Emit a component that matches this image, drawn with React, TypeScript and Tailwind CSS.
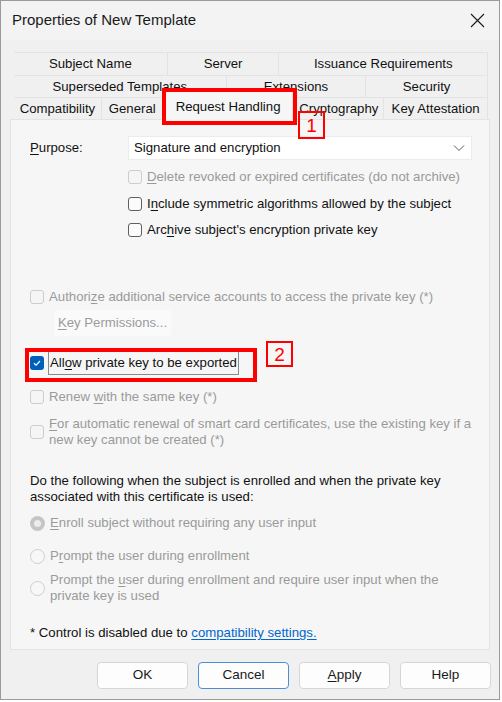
import React from "react";

const font = { fontFamily: '"Liberation Sans", Arial, sans-serif' };

// access-key underline inside a label
function Key({ children }: { children: React.ReactNode }) {
  return <span className="underline underline-offset-2">{children}</span>;
}

function CheckBox({
  checked = false,
  disabled = false,
}: {
  checked?: boolean;
  disabled?: boolean;
}) {
  if (checked) {
    return (
      <span className="flex h-[14px] w-[14px] shrink-0 items-center justify-center rounded-[3px] bg-[#005fb8]">
        <svg width="10" height="10" viewBox="0 0 10 10" fill="none">
          <path d="M2 5.2 L4.1 7.2 L8 3" stroke="#fff" strokeWidth="1.2" />
        </svg>
      </span>
    );
  }
  return (
    <span
      className={`h-[14px] w-[14px] shrink-0 rounded-[3px] border ${
        disabled ? "border-[#cdcdcd] bg-[#f5f5f5]" : "border-[#5f5f5f] bg-[#fbfbfb]"
      }`}
    />
  );
}

function Radio({ selected = false }: { selected?: boolean }) {
  if (selected) {
    return (
      <span className="flex h-[15px] w-[15px] shrink-0 items-center justify-center rounded-full bg-[#c5c5c5]">
        <span className="h-[7px] w-[7px] rounded-full bg-[#ececec]" />
      </span>
    );
  }
  return <span className="h-[15px] w-[15px] shrink-0 rounded-full border border-[#cfcfcf] bg-[#f7f7f7]" />;
}

function Tab({ label, w }: { label: string; w: string }) {
  return (
    <div
      className={`${w} flex h-full items-center justify-center border-l border-t border-[#e3e3e3] first:border-l-0`}
    >
      {label}
    </div>
  );
}

function DialogButton({
  label,
  focused = false,
}: {
  label: React.ReactNode;
  focused?: boolean;
}) {
  return (
    <button
      className={`flex h-[27px] w-[91px] items-center justify-center rounded-[4px] border bg-[#fdfdfd] text-[13.5px] text-[#1a1a1a] ${
        focused ? "border-[#4a8fd6]" : "border-[#d6d6d6]"
      }`}
    >
      {label}
    </button>
  );
}

export default function App() {
  return (
    <div className="h-[702px] w-[502px] bg-white" style={font}>
      <div className="relative flex h-[700px] w-[500px] flex-col border border-[#9a9a9a] bg-[#f0f0f0] text-[13.2px] text-[#111]">
        {/* title bar */}
        <div className="flex h-[39px] shrink-0 items-center justify-between bg-[#f3f3f3] pl-[11px] pr-[14px]">
          <span className="text-[15px] text-[#1a1a1a]">Properties of New Template</span>
          <svg width="15" height="15" viewBox="0 0 15 15">
            <path d="M1 1 L14 14 M14 1 L1 14" stroke="#1a1a1a" strokeWidth="1.1" />
          </svg>
        </div>

        {/* tab strip */}
        <div className="ml-[13px] mt-[12px] w-[474px] text-[13.2px]">
          <div className="flex h-[23px] border-r border-[#e3e3e3]">
            <Tab label="Subject Name" w="w-[153px]" />
            <Tab label="Server" w="w-[112px]" />
            <Tab label="Issuance Requirements" w="w-[209px]" />
          </div>
          <div className="flex h-[22px] border-r border-[#e3e3e3]">
            <Tab label="Superseded Templates" w="w-[212px]" />
            <Tab label="Extensions" w="w-[140px]" />
            <Tab label="Security" w="w-[122px]" />
          </div>
          <div className="flex h-[22px] border-r border-[#e3e3e3]">
            <Tab label="Compatibility" w="w-[87px]" />
            <Tab label="General" w="w-[62px]" />
            <div className="relative z-10 -mt-[6px] flex h-[29px] w-[131px] items-start justify-center border-x border-t border-[#e0e0e0] bg-[#f6f6f6] pt-[5px]">
              Request Handling
            </div>
            <Tab label="Cryptography" w="w-[90px]" />
            <Tab label="Key Attestation" w="w-[104px]" />
          </div>
        </div>

        {/* tab page */}
        <div className="mx-[9px] flex h-[531px] flex-col border border-[#e3e3e3] bg-[#f6f6f6] pl-[19px] pr-[8px] pt-[16px]">
          <div className="flex items-center">
            <span className="w-[98px]">
              <Key>P</Key>urpose:
            </span>
            <div className="flex h-[24px] w-[344px] items-center justify-between border border-[#ececec] bg-white pl-[5px] pr-[6px]">
              <span>Signature and encryption</span>
              <svg width="12" height="8" viewBox="0 0 12 8" fill="none">
                <path d="M1 1.5 L6 6.5 L11 1.5" stroke="#5a5a5a" strokeWidth="1" />
              </svg>
            </div>
          </div>

          <div className="ml-[98px] mt-[7px] flex h-[20px] items-center gap-[5px] text-[#9a9a9a]">
            <CheckBox disabled />
            <span>
              <Key>D</Key>elete revoked or expired certificates (do not archive)
            </span>
          </div>
          <div className="ml-[98px] mt-[7px] flex h-[20px] items-center gap-[5px]">
            <CheckBox />
            <span>
              I<Key>n</Key>clude symmetric algorithms allowed by the subject
            </span>
          </div>
          <div className="ml-[98px] mt-[6px] flex h-[20px] items-center gap-[5px]">
            <CheckBox />
            <span>
              Arc<Key>h</Key>ive subject's encryption private key
            </span>
          </div>

          <div className="mt-[47px] flex h-[20px] items-center gap-[5px] text-[#9a9a9a]">
            <CheckBox disabled />
            <span>
              Authori<Key>z</Key>e additional service accounts to access the private key (*)
            </span>
          </div>
          <div className="ml-[24px] mt-[3px] flex h-[26px] w-[117px] items-center justify-center rounded-[3px] bg-[#fafafa] text-[#9a9a9a]">
            <span>
              <Key>K</Key>ey Permissions...
            </span>
          </div>

          <div className="relative mt-[14px] flex h-[26px] items-center gap-[4px]">
            <CheckBox checked />
            <span className="border border-[#8a8a8a] px-[1px] leading-[22px]">
              All<Key>o</Key>w private key to be exported
            </span>
          </div>

          <div className="mt-[11px] flex h-[20px] items-center gap-[5px] text-[#9a9a9a]">
            <CheckBox disabled />
            <span>
              Renew <Key>w</Key>ith the same key (*)
            </span>
          </div>
          <div className="mt-[9px] flex items-center gap-[5px] text-[#9a9a9a]">
            <CheckBox disabled />
            <span className="leading-[16px]">
              <Key>F</Key>or automatic renewal of smart card certificates, use the existing key if a
              <br />
              new key cannot be created (*)
            </span>
          </div>

          <p className="mt-[25px] leading-[16px]">
            Do the following when the subject is enrolled and when the private key
            <br />
            associated with this certificate is used:
          </p>

          <div className="mt-[8px] flex h-[20px] items-center gap-[5px] text-[#9a9a9a]">
            <Radio selected />
            <span>
              <Key>E</Key>nroll subject without requiring any user input
            </span>
          </div>
          <div className="mt-[13px] flex h-[20px] items-center gap-[5px] text-[#9a9a9a]">
            <Radio />
            <span>
              P<Key>r</Key>ompt the user during enrollment
            </span>
          </div>
          <div className="mt-[6px] flex items-center gap-[5px] text-[#9a9a9a]">
            <Radio />
            <span className="leading-[16px]">
              Prompt the <Key>u</Key>ser during enrollment and require user input when the
              <br />
              private key is used
            </span>
          </div>

          <div className="mt-[19px] flex h-[20px] items-center">
            <span>
              * Control is disabled due to{" "}
              <a className="text-[#0066cc] underline underline-offset-2">compatibility settings.</a>
            </span>
          </div>
        </div>

        {/* dialog buttons */}
        <div className="mr-[8px] mt-[12px] flex justify-end gap-[10px]">
          <DialogButton label="OK" />
          <DialogButton label="Cancel" focused />
          <DialogButton
            label={
              <span>
                <Key>A</Key>pply
              </span>
            }
          />
          <DialogButton label="Help" />
        </div>

        {/* callout markers */}
        <div className="absolute left-[161px] top-[87px] z-20 h-[37px] w-[135px] border-4 border-[#ff0000]" />
        <div className="absolute left-[297px] top-[110px] z-20 flex h-[28px] w-[27px] items-center justify-center border-2 border-[#ff0000] text-[19px] leading-none text-[#ff0000]">
          1
        </div>
        <div className="absolute left-[24px] top-[347px] z-20 h-[34px] w-[232px] border-4 border-[#ff0000]" />
        <div className="absolute left-[265px] top-[340px] z-20 flex h-[26px] w-[27px] items-center justify-center border-2 border-[#ff0000] text-[19px] leading-none text-[#ff0000]">
          2
        </div>
      </div>
    </div>
  );
}
